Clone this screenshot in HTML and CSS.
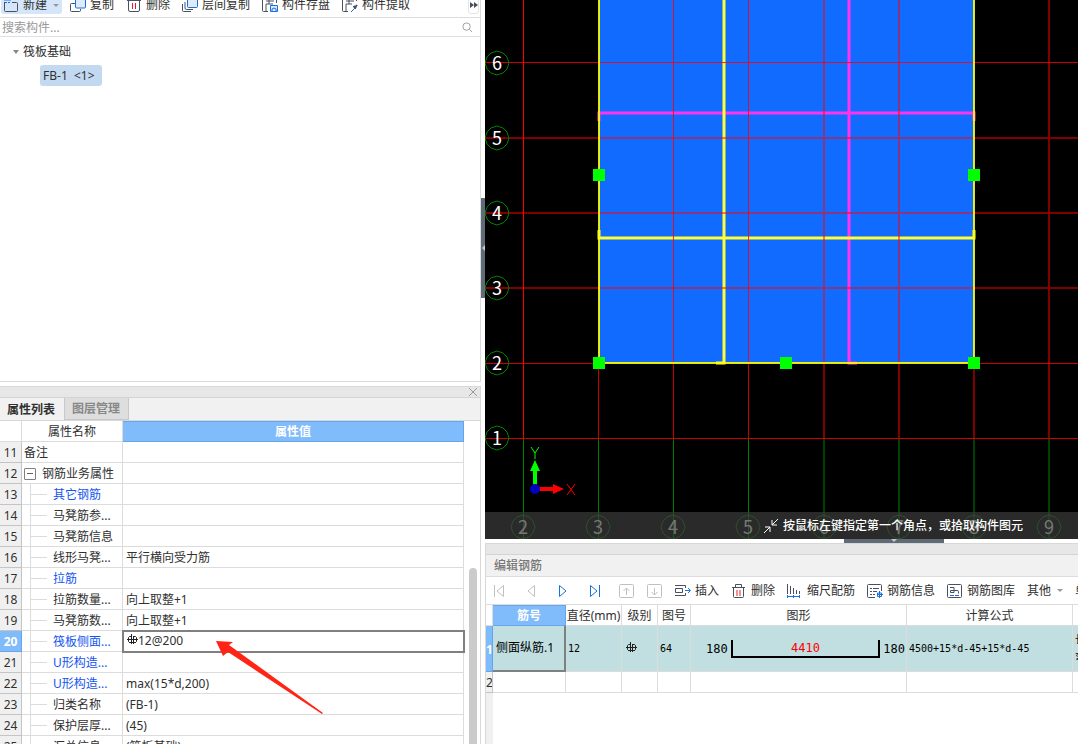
FILE: index.html
```html
<!DOCTYPE html>
<html lang="zh-CN">
<head>
<meta charset="utf-8">
<title>筏板基础</title>
<link rel="stylesheet" href="styles.css">
</head>
<body>
<div class="app">
  <div class="side">
    <section class="components">
      <div class="toolbar toolbar-top">
        <button class="tool tool-active"><svg class="icon" viewBox="0 0 16 16"><path class="ink" d="M1.500 5v8.500q0 1 1 1h11q1 0 1-1V6.500q0-1-1-1H9"/><path class="accent" d="M2 5.500h2M5 5.500h2M1 3h7"/></svg>新建<span class="caret"></span></button>
        <button class="tool"><svg class="icon" viewBox="0 0 16 16"><path class="ink" d="M5 6.500H1.500q-1 0-1 1v6q0 1 1 1h8q1 0 1-1V12"/><rect class="accent tint" x="5.500" y="1.500" width="10" height="9.500" rx="1"/></svg>复制</button>
        <button class="tool"><svg class="icon" viewBox="0 0 16 16"><path class="ink" d="M2.500 3v10q0 1.500 1.500 1.500h8q1.500 0 1.500-1.500V3M1 3.500h14"/><path class="danger" d="M6.500 6v6M9.500 6v6"/></svg>删除</button>
        <button class="tool"><svg class="icon" viewBox="0 0 16 16"><path class="ink" d="M.5 7v6.500q0 1 1 1H9M3 5v6q0 1.500 1.500 1.500H11"/><rect class="accent tint" x="5.500" y="1.500" width="10" height="9" rx="1"/></svg>层间复制</button>
        <button class="tool"><svg class="icon" viewBox="0 0 16 16"><path class="ink" d="M6 14.500H1.500q-1 0-1-1V1h14v5M4 14V7h7M4 4h8M7 3v4"/><path class="accent tint" d="M8.500 8.500h7v6h-7zM10 14.500V12l2-1 2 1v2.500"/></svg>构件存盘</button>
        <button class="tool"><svg class="icon" viewBox="0 0 16 16"><path class="ink" d="M6 14.500H1.500q-1 0-1-1V1h14v3M4 14V7h6M4 4h8M7 3v4"/><path class="accent" d="M9 15l4-4"/><path class="ink thick" d="M11.500 9l2.500 2.500M13 10.500l2-2.500"/></svg>构件提取</button>
        <button class="more" aria-label="更多"><svg viewBox="0 0 8 6" width="8" height="6"><path fill="#44505c" d="M0 0l4 3-4 3zM4 0l4 3-4 3z"/></svg></button>
      </div>
      <div class="search">
        <input class="search-box" type="text" aria-label="搜索构件" placeholder="搜索构件...">
        <svg class="search-icon" viewBox="0 0 12 12"><circle cx="5" cy="5" r="4"/><path d="M8 8l3 3"/></svg>
      </div>
      <div class="tree">
        <div class="tree-root"><span class="tree-caret"></span>筏板基础</div>
        <div class="tree-node">FB-1  &lt;1&gt;</div>
      </div>
    </section>

    <section class="properties">
      <div class="dock"><button class="close" aria-label="关闭"><svg viewBox="0 0 8 8" width="8" height="8"><path d="M0 0l8 8M8 0L0 8"/></svg></button></div>
      <div class="tabs">
        <button class="tab tab-current">属性列表</button>
        <button class="tab">图层管理</button>
      </div>
      <div class="prop-body">
        <table class="grid prop-table">
          <colgroup><col class="c-index"><col class="c-name"><col></colgroup>
          <thead><tr><th class="corner"></th><th>属性名称</th><th class="head-active">属性值</th></tr></thead>
          <tbody>
            <tr><th>11</th><td class="top-name">备注</td><td></td></tr>
            <tr><th>12</th><td class="top-name"><span class="group"><button class="fold" aria-label="折叠"></button>钢筋业务属性</span></td><td></td></tr>
            <tr><th>13</th><td class="leaf link">其它钢筋</td><td></td></tr>
            <tr><th>14</th><td class="leaf">马凳筋参...</td><td></td></tr>
            <tr><th>15</th><td class="leaf">马凳筋信息</td><td></td></tr>
            <tr><th>16</th><td class="leaf">线形马凳...</td><td>平行横向受力筋</td></tr>
            <tr><th>17</th><td class="leaf link">拉筋</td><td></td></tr>
            <tr><th>18</th><td class="leaf">拉筋数量...</td><td>向上取整+1</td></tr>
            <tr><th>19</th><td class="leaf">马凳筋数...</td><td>向上取整+1</td></tr>
            <tr><th class="index-active">20</th><td class="leaf link">筏板侧面...</td><td class="editing"><svg class="rebar" viewBox="0 0 11 11"><path d="M4.500 0v10M6.500 2v8M0 5.500h11M2 8.500h7"/><path d="M4.500 2.500h-2l-1 1v4l1 1M6.500 2.500h2l1 1v4l-1 1"/></svg>12@200</td></tr>
            <tr><th>21</th><td class="leaf link">U形构造...</td><td></td></tr>
            <tr><th>22</th><td class="leaf link">U形构造...</td><td>max(15*d,200)</td></tr>
            <tr><th>23</th><td class="leaf">归类名称</td><td>(FB-1)</td></tr>
            <tr><th>24</th><td class="leaf">保护层厚...</td><td>(45)</td></tr>
            <tr><th>25</th><td class="leaf">汇总信息</td><td>(筏板基础)</td></tr>
          </tbody>
        </table>
        <div class="gutter"><div class="thumb"></div></div>
      </div>
      <svg class="pointer" viewBox="0 0 108 74"><path d="M0 0l17 1-4 3 94 68-1 1L12 11l-5 4z"/></svg>
    </section>
  </div>

  <div class="split"><button class="split-handle" aria-label="收起左侧"><svg viewBox="0 0 4 6" width="4" height="6"><path fill="#c3c9ce" d="M4 0v6L1 3z"/></svg></button></div>

  <div class="main">
    <section class="canvas">
      <svg class="drawing">
        <defs><polygon id="bubble" points="0,-12 6,-10 10,-6 12,0 10,6 6,10 0,12 -6,10 -10,6 -12,0 -10,-6 -6,-10"/></defs>
        <rect x="114" y="-1" width="375" height="364" fill="#126bff"/>
        <g stroke-width="3" fill="none">
          <path stroke="#ff33ee" d="M114 121v-8h375v8M364 0v363h8"/>
          <path stroke="#ffff33" d="M114 230v8h375v-8M239 0v363h-8"/>
        </g>
        <path stroke="#f00" d="M38.500 0v438"/>
        <g stroke="#f00" stroke-opacity=".8">
          <path d="M188.500 0v438M263.500 0v438M0 62.500h2000"/>
          <path d="M0 438.500h2000M113.500 363v75M0 363.500h113M489 363.500h2000"/>
        </g>
        <path stroke="#f00" stroke-opacity=".5" stroke-width="2" d="M339 0v438M414 0v438M489 363v75M564 0v438M0 138h2000M0 213h2000M0 288h2000"/>
        <path stroke="#008000" d="M38.500 439v100M113.500 439v100M188.500 439v100M263.500 439v100"/>
        <path stroke="#004000" stroke-width="2" d="M339 439v100M414 439v100M489 439v100M564 439v100"/>
        <path stroke="#ffff00" stroke-opacity=".9" stroke-width="2" fill="none" d="M114 0v363h375V0"/>
        <g fill="#0f0">
          <rect x="108" y="169" width="12" height="12"/><rect x="483" y="169" width="12" height="12"/>
          <rect x="108" y="357" width="12" height="12"/><rect x="295" y="357" width="12" height="12"/><rect x="483" y="357" width="12" height="12"/>
        </g>
        <g fill="none" stroke="#008000">
          <use href="#bubble" x="12" y="63"/><use href="#bubble" x="12" y="138"/><use href="#bubble" x="12" y="213"/><use href="#bubble" x="12" y="288"/><use href="#bubble" x="12" y="363"/><use href="#bubble" x="12" y="438"/>
          <use href="#bubble" x="38" y="527"/><use href="#bubble" x="113" y="527"/><use href="#bubble" x="188" y="527"/><use href="#bubble" x="263" y="527"/><use href="#bubble" x="339" y="527"/><use href="#bubble" x="414" y="527"/><use href="#bubble" x="489" y="527"/><use href="#bubble" x="564" y="527"/>
        </g>
        <g class="axis-text">
          <text x="12" y="70">6</text><text x="12" y="145">5</text><text x="12" y="220">4</text><text x="12" y="295">3</text><text x="12" y="370">2</text><text x="12" y="445">1</text>
          <text x="38" y="534">2</text><text x="113" y="534">3</text><text x="188" y="534">4</text><text x="263" y="534">5</text><text x="339" y="534">6</text><text x="414" y="534">7</text><text x="489" y="534">8</text><text x="564" y="534">9</text>
        </g>
        <path fill="#0f0" d="M48 488V471h-3l5-11 5 11h-3v17z"/>
        <path fill="#f00" d="M50 487h18v-3l11 5-11 5v-3H50z"/>
        <circle cx="50" cy="489" r="5" fill="#0000c0"/>
        <path fill="none" stroke="#0f0" d="M46 447l4 6 4-6M50 453v6"/>
        <path fill="none" stroke="#f00" d="M82 484l8 11M90 484l-8 11"/>
      </svg>
      <div class="hint"><svg class="hint-icon" viewBox="0 0 16 16"><path d="M15 1L9 7M9 2v5h5M1 15l6-6M2 9h5v5"/></svg>按鼠标左键指定第一个角点，或拾取构件图元</div>
    </section>

    <div class="split-row"><button class="split-bar" aria-label="收起下方"><svg viewBox="0 0 6 4" width="6" height="4"><path fill="#c3c9ce" d="M0 0h6L3 3z"/></svg></button></div>

    <section class="rebars">
      <div class="dock"></div>
      <h2 class="rebars-title">编辑钢筋</h2>
      <div class="toolbar toolbar-rebar">
        <div class="nav">
          <button class="tool" aria-label="第一条"><svg class="icon" viewBox="0 0 16 16"><path class="muted" d="M3.500 2v12M12.500 2.500v11L6 8z"/></svg></button>
          <button class="tool" aria-label="上一条"><svg class="icon" viewBox="0 0 16 16"><path class="muted" d="M11.500 2.500v11L5 8z"/></svg></button>
          <button class="tool" aria-label="下一条"><svg class="icon" viewBox="0 0 16 16"><path class="accent" d="M4.500 2.500v11L11 8z"/></svg></button>
          <button class="tool" aria-label="最后一条"><svg class="icon" viewBox="0 0 16 16"><path class="accent" d="M12.500 2v12M3.500 2.500v11L10 8z"/></svg></button>
        </div>
        <button class="tool" aria-label="上移"><svg class="icon" viewBox="0 0 16 16"><rect class="muted" x=".5" y="1.500" width="14" height="13" rx="1"/><path class="muted" d="M7.500 12V5M4.500 8l3-3 3 3"/></svg></button>
        <button class="tool" aria-label="下移"><svg class="icon" viewBox="0 0 16 16"><rect class="muted" x=".5" y="1.500" width="14" height="13" rx="1"/><path class="muted" d="M7.500 5v7M4.500 9l3 3 3-3"/></svg></button>
        <button class="tool"><svg class="icon" viewBox="0 0 16 16"><path class="ink" d="M0 2.500h10.500V5M0 12.500h10.500V10M.5 5.500h7v4h-7z"/><path class="accent" d="M10 7.500h5M13 5l2.500 2.500L13 10"/></svg>插入</button>
        <button class="tool"><svg class="icon" viewBox="0 0 16 16"><path class="ink" d="M1 4.500h13M4.500 4V1.500h6V4M2.500 5v8.500q0 1 1 1h8q1 0 1-1V5"/><path class="danger" d="M6 7v6M9 7v6"/></svg>删除</button>
        <button class="tool"><svg class="icon" viewBox="0 0 16 16"><path class="ink" d="M.5 1v10M3.500 3v8M6.500 5v6M9.500 7v4M12.500 8v3"/><path class="accent" d="M0 13.500h13M.5 12v3M6.500 12v3M12.500 12v3"/></svg>缩尺配筋</button>
        <button class="tool"><svg class="icon" viewBox="0 0 16 16"><path class="ink" d="M8 14.500H1.500q-1 0-1-1v-11q0-1 1-1h12q1 0 1 1V8M3 5.500h2M6 5.500h6M3 8.500h2M6 8.500h4M3 11.500h2M6 11.500h2"/><path class="accent" d="M12.500 8v7M10 11.500h6M10.500 10v3.500h4V10z"/></svg>钢筋信息</button>
        <button class="tool"><svg class="icon" viewBox="0 0 16 16"><rect class="ink" x=".5" y="1.500" width="14" height="13" rx="1"/><path class="ink" d="M3 4.500h4v5H3.500v-2H10q1.500 0 1.500 1v2"/><path class="accent" d="M3 12.500h4M8 12.500h4"/></svg>钢筋图库</button>
        <button class="tool">其他<span class="caret"></span></button>
        <button class="tool">单构件</button>
      </div>
      <div class="rebar-body">
        <table class="grid rebar-table">
          <colgroup><col class="r-index"><col class="r-name"><col class="r-dia"><col class="r-level"><col class="r-code"><col class="r-shape"><col class="r-formula"><col></colgroup>
          <thead><tr><th class="corner"></th><th class="head-active">筋号</th><th>直径(mm)</th><th>级别</th><th>图号</th><th>图形</th><th>计算公式</th><th></th></tr></thead>
          <tbody>
            <tr class="row-current">
              <th class="index-active">1</th><td class="cell-focus">侧面纵筋.1</td><td class="mono">12</td>
              <td class="level"><svg class="rebar" viewBox="0 0 11 11"><path d="M4.500 0v10M6.500 2v8M0 5.500h11M2 8.500h7"/><path d="M4.500 2.500h-2l-1 1v4l1 1M6.500 2.500h2l1 1v4l-1 1"/></svg></td>
              <td class="mono">64</td>
              <td class="shape-cell"><div class="shape"><span>180</span><span class="shape-bar">4410</span><span>180</span></div></td>
              <td class="mono">4500+15*d-45+15*d-45</td><td class="mono">长度<br>弯折</td>
            </tr>
            <tr><th>2</th><td></td><td></td><td></td><td></td><td></td><td></td><td></td></tr>
          </tbody>
        </table>
      </div>
    </section>
  </div>
</div>
</body>
</html>
```

FILE: styles.css
```css
* { box-sizing: border-box; }
body {
  margin: 0;
  font-family: "Noto Sans", "Noto Sans CJK SC", sans-serif;
  font-size: 12px;
  line-height: 18px;
  color: #303030;
  background: #fff;
}
button {
  margin: 0;
  padding: 0;
  border: 0;
  background: none;
  font: inherit;
  color: inherit;
}
svg { display: block; flex: none; }

.app { display: flex; height: 100vh; overflow: hidden; }
.side { flex: 481 1 0; min-width: 0; display: flex; flex-direction: column; gap: 4px; }
.main { flex: 593 1 0; min-width: 0; display: flex; flex-direction: column; }

/* Toolbars */
.toolbar { display: flex; gap: 12px; border-bottom: 1px solid #dcdcdc; }
.tool { display: flex; flex: none; align-items: center; gap: 4px; height: 18px; white-space: nowrap; }
.icon { width: 16px; height: 16px; fill: none; }
.ink { stroke: #4a5060; }
.thick { stroke-width: 2; }
.accent { stroke: #1a6fe0; }
.tint { fill: #ddebfb; }
.danger { stroke: #e02020; }
.muted { stroke: #c0c0c0; }
.caret { margin-left: 2px; border: 3px solid transparent; border-top: 3px solid #999; border-bottom: 0; }
.toolbar-top { flex: none; height: 18px; align-items: flex-end; padding: 0 1px 3px; overflow: hidden; }
.tool-active { margin-right: -4px; padding: 0 3px 0 2px; background: #d5e6fa; border-radius: 0 0 3px 3px; }
.more { flex: none; display: flex; align-items: center; justify-content: center; width: 11px; height: 18px; margin-left: auto; border: 1px solid #e4e4e4; border-radius: 3px; }

/* Component list */
.components { flex: 382 1 0; min-height: 0; display: flex; flex-direction: column; border: solid #dcdcdc; border-width: 0 1px 1px 0; }
.search { display: flex; flex: none; align-items: center; height: 19px; padding: 0 7px 0 2px; border-bottom: 1px solid #e0e0e0; }
.search-box { flex: 1; min-width: 0; padding: 1px 0 0; border: 0; outline: 0; background: none; font: inherit; }
.search-box::placeholder { color: #999; }
.search-icon { width: 11px; height: 11px; fill: none; stroke: #999; }
.tree { padding: 5px 0 0 13px; }
.tree-root { display: flex; align-items: center; gap: 4px; height: 20px; }
.tree-caret { border: 3px solid transparent; border-top: 4px solid #888; border-bottom: 0; }
.tree-node { width: max-content; min-width: 62px; margin: 3px 0 0 27px; padding: 0 5px 0 3px; line-height: 21px; white-space: pre; background: #c3d9f1; border-radius: 3px; }

/* Property panel */
.properties { position: relative; flex: 358 1 0; min-height: 0; display: flex; flex-direction: column; overflow: hidden; border: solid #d8d8d8; border-width: 1px 1px 0 0; }
.dock { display: flex; flex: none; justify-content: flex-end; align-items: center; height: 11px; padding-right: 3px; background: #e7e7e7; border-bottom: 1px solid #d4d4d4; }
.close { fill: none; stroke: #999; }
.tabs { display: flex; flex: none; height: 23px; background: #f1f1f1; border-bottom: 1px solid #d8d8d8; }
.tab { padding: 2px 8px 0 7px; font-weight: 700; color: #888; background: #dedede; border-right: 1px solid #c8c8c8; border-bottom: 1px solid #c8c8c8; }
.tab-current { padding-right: 9px; color: #303030; background: #f1f1f1; border-bottom: 0; }
.prop-body { display: flex; flex: 1; min-height: 0; overflow: hidden; }
.gutter { flex: none; width: 16px; padding: 147px 3px 0 5px; }
.thumb { height: 100%; background: #cbcbcb; border-radius: 4px 4px 0 0; }
.pointer { position: absolute; left: 216px; top: 254px; width: 108px; height: 74px; fill: #ff2414; }

/* Data grids */
.grid { table-layout: fixed; border-collapse: separate; border-spacing: 0; }
.grid th, .grid td { height: 21px; padding: 2px 3px 0; border: solid #dcdcdc; border-width: 0 1px 1px 0; font-weight: 400; text-align: left; line-height: 18px; white-space: nowrap; overflow: hidden; }
.grid thead th { text-align: center; }
.grid tbody th { padding: 2px 0 0; text-align: center; background: #f0f0f0; border-color: #c4c4c4; }
.grid thead .head-active { color: #fff; font-weight: 700; background: #80bbfb; border-color: #64a6ec; box-shadow: inset 0 1px #64a6ec; }
.grid tbody .index-active { color: #fff; font-weight: 700; background: #80bbfb; border-color: #64a6ec; }
.prop-table { flex: 1; min-width: 0; align-self: flex-start; }
.c-index { width: 22px; }
.c-name { width: 101px; }
.grid .leaf { padding-left: 31px; background: linear-gradient(#dcdcdc, #dcdcdc) 8px 0 / 1px 100% no-repeat, linear-gradient(#dcdcdc, #dcdcdc) 9px 10px / 16px 1px no-repeat; }
.grid .link { color: #1455f0; }
.group { display: flex; align-items: center; gap: 6px; }
.fold { width: 12px; height: 12px; border: 1px solid #808080; border-radius: 1px; background: linear-gradient(#606060, #606060) center / 6px 1px no-repeat; }
.grid .top-name { padding-left: 2px; }
.grid .editing { padding-top: 0; padding-left: 4px; outline: 2px solid #808080; outline-offset: -1px; }
.rebar { display: inline-block; width: 11px; height: 11px; fill: none; stroke: #202020; }

/* Splitters */
.split { display: flex; flex: none; align-items: flex-start; width: 4px; padding-top: 198px; }
.split-handle { display: flex; align-items: center; width: 4px; height: 100px; background: #5f6b77; }
.split-row { flex: none; height: 4px; padding-left: 359px; display: flex; }
.split-bar { display: flex; justify-content: center; width: 100px; height: 4px; background: #5f6b77; }

/* Drawing area */
.canvas { position: relative; flex: 539 1 0; min-height: 0; overflow: hidden; background: #000; }
.drawing { width: 100%; height: 100%; }
.axis-text { font-family: "Noto Sans CJK SC", sans-serif; font-size: 18px; text-anchor: middle; fill: #fff; }
.hint { position: absolute; left: 0; right: 0; bottom: 0; display: flex; align-items: center; gap: 4px; height: 27px; padding-left: 278px; color: #fff; font-weight: 500; white-space: nowrap; background: rgba(60, 60, 60, .7); }
.hint-icon { width: 16px; height: 16px; fill: none; stroke: #fff; }

/* Rebar editor */
.rebars { flex: 200 1 0; min-height: 0; display: flex; flex-direction: column; overflow: hidden; border: solid #d8d8d8; border-width: 1px 0 0 1px; }
.rebars-title { flex: none; height: 22px; margin: 0; padding-left: 8px; font-size: 12px; font-weight: 500; line-height: 22px; color: #777; background: #f1f1f1; border-bottom: 1px solid #dcdcdc; }
.toolbar-rebar { flex: none; height: 28px; align-items: center; padding-left: 5px; overflow: hidden; }
.nav { display: flex; gap: 16px; margin-right: 4px; }
.rebar-body { flex: 1; min-height: 0; overflow: hidden; background: linear-gradient(#f0f0f0, #f0f0f0) 0 0 / 7px 100% no-repeat; }
.rebar-table { width: 647px; background: #fff; }
.r-index { width: 7px; }
.r-name { width: 73px; }
.r-dia { width: 56px; }
.r-level { width: 36px; }
.r-code { width: 33px; }
.r-shape { width: 216px; }
.r-formula { width: 166px; }
.rebar-table thead th { padding: 2px 0 0; }
.grid .row-current td { height: 46px; padding-top: 0; color: #000; background: #c1dfe1; }
.grid .row-current .cell-focus { border-right: 2px solid #808080; border-bottom: 2px solid #808080; }
.grid .level { padding-left: 4px; }
.grid .mono { padding-left: 2px; font-family: "DejaVu Sans Mono", "Noto Sans CJK SC", monospace; font-size: 10px; }
.grid .shape-cell { padding: 0 1px 0 15px; }
.shape { display: flex; align-items: center; gap: 3px; font-family: "DejaVu Sans Mono", monospace; font-size: 12px; }
.shape-bar { flex: 1; height: 18px; line-height: 16px; text-align: center; color: #f00; border: solid #000; border-width: 0 2px 2px; }
```
